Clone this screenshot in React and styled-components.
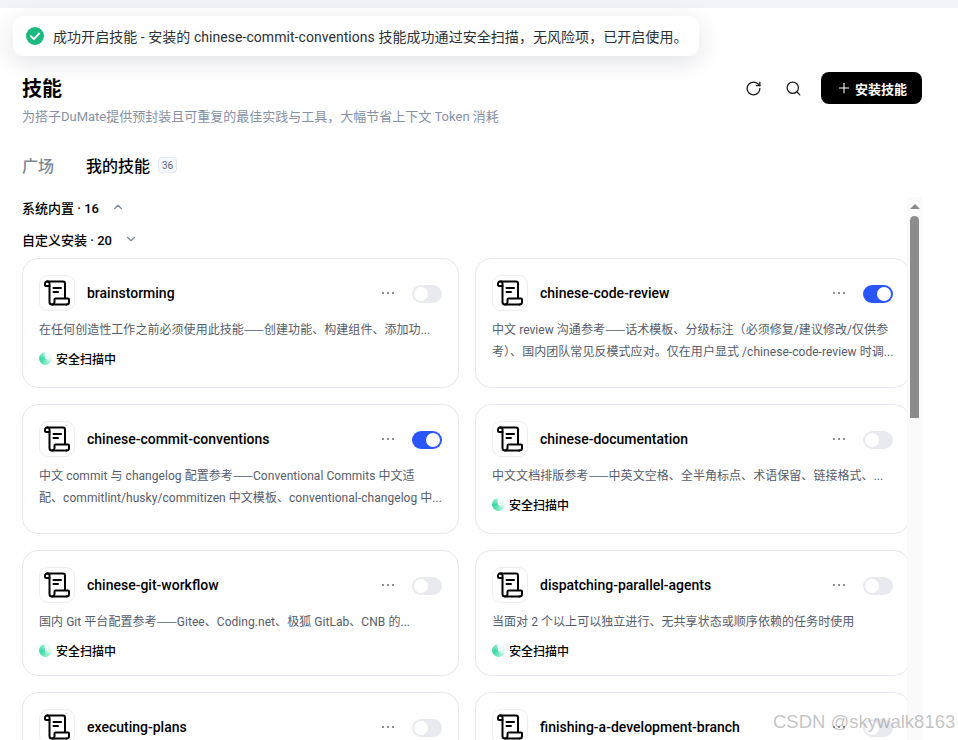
import React from 'react';
import styled, { createGlobalStyle } from 'styled-components';
import { Plus, RotateCw, Search, ChevronUp, ChevronDown } from 'lucide-react';

const GlobalStyle = createGlobalStyle`
    html, body {
        margin: 0;
        background: #fff;
        font-family: Roboto, "Noto Sans CJK SC", sans-serif;
    }
`;

const Page = styled.div`
    position: relative;
    display: flex;
    flex-direction: column;
    height: 740px;
    overflow: hidden;
    background: #fff;
`;

const TopStrip = styled.div`
    flex: none;
    height: 8px;
    background: #f0f3f8;
`;

const Content = styled.div`
    flex: 1;
    min-height: 0;
    display: flex;
    flex-direction: column;
    padding: 0 36px 0 22px;
`;

const Toast = styled.div`
    position: absolute;
    left: 13px;
    top: 16px;
    width: 686px;
    height: 40px;
    box-sizing: border-box;
    display: flex;
    align-items: center;
    gap: 9px;
    padding-left: 13px;
    background: #fff;
    border-radius: 10px;
    box-shadow: 0 6px 24px rgba(20, 30, 60, 0.13);
    font-size: 14px;
    letter-spacing: 0.05px;
    color: #2b2f38;
    white-space: nowrap;
`;

const Header = styled.header`
    display: flex;
    align-items: center;
    justify-content: space-between;
    height: 32px;
    margin-top: 64px;
`;

const Title = styled.h1`
    margin: 0 0 2px;
    font-size: 20px;
    font-weight: 700;
    color: #000;
`;

const Actions = styled.div`
    display: flex;
    align-items: center;
`;

const IconButton = styled.button`
    display: flex;
    align-items: center;
    justify-content: center;
    width: 40px;
    height: 32px;
    padding: 0;
    border: 0;
    background: none;
    color: #1a1a1a;
`;

const InstallButton = styled.button`
    display: flex;
    align-items: center;
    gap: 3px;
    width: 101px;
    height: 32px;
    margin-left: 8px;
    padding: 0 0 0 15px;
    box-sizing: border-box;
    border: 0;
    border-radius: 8px;
    background: #000;
    color: #fff;
    font-family: inherit;
    font-size: 13px;
    font-weight: 700;
`;

const Subtitle = styled.p`
    margin: 3px 0 0;
    font-size: 13px;
    line-height: 20px;
    color: #8791a5;
`;

const Tabs = styled.nav`
    display: flex;
    align-items: center;
    gap: 32px;
    height: 24px;
    margin-top: 26px;
`;

const Tab = styled.span`
    display: flex;
    align-items: center;
    gap: 8px;
    font-size: 16px;
    font-weight: 500;
    color: ${props => (props.$active ? '#000' : '#7d8798')};
`;

const CountBadge = styled.span`
    display: inline-flex;
    align-items: center;
    justify-content: center;
    width: 19px;
    height: 16px;
    box-sizing: border-box;
    border: 1px solid #e4e8f2;
    border-radius: 4px;
    background: #f7f9fd;
    font-size: 10px;
    font-weight: 400;
    color: #5a6478;
`;

const Body = styled.div`
    flex: 1;
    min-height: 0;
    display: flex;
    margin-top: 20px;
`;

const List = styled.div`
    flex: 1;
    min-width: 0;
    overflow: hidden;
`;

const Section = styled.div`
    display: flex;
    align-items: center;
    gap: 12px;
    height: 20px;
    margin-bottom: 12px;
    font-size: 13px;
    font-weight: 500;
    color: #000;
`;

const Grid = styled.div`
    display: grid;
    grid-template-columns: 1fr 1fr;
    gap: 16px;
    margin-top: -3px;
`;

const Card = styled.article`
    box-sizing: border-box;
    padding: 16px 16px 15px;
    border: 1px solid #e6e8ef;
    border-radius: 16px;
    background: #fff;
`;

const CardTop = styled.div`
    display: flex;
    align-items: center;
`;

const IconBox = styled.div`
    flex: none;
    display: flex;
    align-items: center;
    justify-content: center;
    width: 36px;
    height: 36px;
    box-sizing: border-box;
    border: 1px solid #eceef3;
    border-radius: 9px;
    color: #000;
`;

const CardName = styled.div`
    flex: 1;
    margin-left: 12px;
    font-size: 14px;
    font-weight: 500;
    color: #000;
    white-space: nowrap;
`;

const Dots = styled.div`
    display: flex;
    gap: 3px;
    margin-right: 18px;
`;

const Dot = styled.i`
    width: 2px;
    height: 2px;
    border-radius: 50%;
    background: #666b78;
`;

const Toggle = styled.div`
    flex: none;
    display: flex;
    justify-content: ${props => (props.$on ? 'flex-end' : 'flex-start')};
    width: 30px;
    height: 18px;
    margin-top: 1px;
    box-sizing: border-box;
    padding: 2px;
    border-radius: 9px;
    background: ${props => (props.$on ? '#2a56ff' : '#e9eaf0')};
    &::after {
        content: '';
        width: 14px;
        height: 14px;
        border-radius: 50%;
        background: #fff;
    }
`;

const Description = styled.p`
    margin: 8px 0 0;
    font-size: 12px;
    line-height: 22px;
    letter-spacing: 0.05px;
    color: #555c6b;
    white-space: pre;
`;

// Roboto's em dash leaves gaps, the CJK one joins up
const Dash = styled.span`
    font-family: "Noto Sans CJK SC", sans-serif;
    line-height: 0;
    letter-spacing: 0;
`;

const Status = styled.div`
    display: flex;
    align-items: center;
    gap: 4px;
    height: 20px;
    margin-top: 7px;
    font-size: 12px;
    font-weight: 500;
    color: #000;
`;

const StatusSpacer = styled.div`
    height: 9px;
`;

const Spinner = styled.span`
    width: 13px;
    height: 13px;
    border-radius: 50%;
    background: conic-gradient(#f6fdfb 0deg, #dff8ef 100deg, #6fe6bf 190deg, #36d9a4 265deg, #86eccb 335deg, #f6fdfb 360deg);
`;

const ScrollBar = styled.div`
    flex: none;
    display: flex;
    flex-direction: column;
    align-items: center;
    width: 15px;
    background: #fafafa;
`;

const ScrollArrow = styled.div`
    width: 0;
    height: 0;
    margin-top: 7px;
    border-left: 5px solid transparent;
    border-right: 5px solid transparent;
    border-bottom: 5px solid #8c8c8c;
`;

const ScrollThumb = styled.div`
    width: 9px;
    height: 202px;
    margin-top: 7px;
    border-radius: 5px 5px 0 0;
    background: #8c8c8c;
`;

const Watermark = styled.div`
    position: absolute;
    left: 773px;
    top: 711px;
    font-family: "Liberation Sans", sans-serif;
    font-size: 18.5px;
    line-height: 22px;
    color: rgba(110, 110, 110, 0.42);
    white-space: nowrap;
`;

const CheckIcon = () => (
    <svg width="18" height="18" viewBox="0 0 18 18" fill="none">
        <circle cx="9" cy="9" r="9" fill="#19b97f" />
        <path d="M5 9.2l2.9 2.9L13 6.6" stroke="#fff" strokeWidth="2" strokeLinecap="round" strokeLinejoin="round" />
    </svg>
);

const ScrollIcon = () => (
    <svg width="26" height="26" viewBox="0 0 26 26" fill="none" stroke="currentColor" strokeWidth="2" strokeLinecap="round" strokeLinejoin="round">
        <path d="M3 1.5H19a2 2 0 0 1 2 2V18" />
        <path d="M3 1.5a2 2 0 0 0-2 2V5a1 1 0 0 0 1 1H5.5V3.5a2 2 0 0 0-2-2" />
        <path d="M5.5 6V22a2.5 2.5 0 0 0 2.5 2.5H22.5" />
        <path d="M8 24.5a2.5 2.5 0 0 0 2.5-2.5V19.5a1 1 0 0 1 1-1H24a1 1 0 0 1 1 1V22a2.5 2.5 0 0 1-2.5 2.5" />
        <path d="M9.5 8H17" />
        <path d="M9.5 12H14" />
    </svg>
);

const skills = [
    {
        name: 'brainstorming',
        desc: '在任何创造性工作之前必须使用此技能——创建功能、构建组件、添加功...',
        scanning: true
    },
    {
        name: 'chinese-code-review',
        desc: '中文 review 沟通参考——话术模板、分级标注（必须修复/建议修改/仅供参\n考）、国内团队常见反模式应对。仅在用户显式 /chinese-code-review 时调...',
        on: true
    },
    {
        name: 'chinese-commit-conventions',
        desc: '中文 commit 与 changelog 配置参考——Conventional Commits 中文适\n配、commitlint/husky/commitizen 中文模板、conventional-changelog 中...',
        on: true
    },
    {
        name: 'chinese-documentation',
        desc: '中文文档排版参考——中英文空格、全半角标点、术语保留、链接格式、...',
        scanning: true
    },
    {
        name: 'chinese-git-workflow',
        desc: '国内 Git 平台配置参考——Gitee、Coding.net、极狐 GitLab、CNB 的...',
        scanning: true
    },
    {
        name: 'dispatching-parallel-agents',
        desc: '当面对 2 个以上可以独立进行、无共享状态或顺序依赖的任务时使用',
        scanning: true
    },
    {
        name: 'executing-plans',
        desc: '当有书面实施计划需要在单独会话中执行时使用，并设有审查检查点',
        scanning: true
    },
    {
        name: 'finishing-a-development-branch',
        desc: '当实现完成、所有测试通过后，需要决定如何集成工作时使用',
        scanning: true
    }
];

const SkillCard = ({ skill }) => {
    const [before, after] = skill.desc.split('——');
    return (
        <Card>
            <CardTop>
                <IconBox>
                    <ScrollIcon />
                </IconBox>
                <CardName>{skill.name}</CardName>
                <Dots>
                    <Dot />
                    <Dot />
                    <Dot />
                </Dots>
                <Toggle $on={skill.on} />
            </CardTop>
            <Description>
                {before}
                {after && <Dash>——</Dash>}
                {after}
            </Description>
            {skill.scanning ? (
                <Status>
                    <Spinner />
                    安全扫描中
                </Status>
            ) : (
                <StatusSpacer />
            )}
        </Card>
    );
};

export default function App() {
    return (
        <Page>
            <GlobalStyle />
            <TopStrip />
            <Content>
                <Header>
                    <Title>技能</Title>
                    <Actions>
                        <IconButton>
                            <RotateCw size={17} strokeWidth={1.8} />
                        </IconButton>
                        <IconButton>
                            <Search size={17} strokeWidth={1.8} />
                        </IconButton>
                        <InstallButton>
                            <Plus size={16} strokeWidth={1.6} />
                            安装技能
                        </InstallButton>
                    </Actions>
                </Header>
                <Subtitle>为搭子DuMate提供预封装且可重复的最佳实践与工具，大幅节省上下文 Token 消耗</Subtitle>
                <Tabs>
                    <Tab>广场</Tab>
                    <Tab $active>
                        我的技能
                        <CountBadge>36</CountBadge>
                    </Tab>
                </Tabs>
                <Body>
                    <List>
                        <Section>
                            系统内置 · 16
                            <ChevronUp size={14} color="#7d8798" />
                        </Section>
                        <Section>
                            自定义安装 · 20
                            <ChevronDown size={14} color="#7d8798" />
                        </Section>
                        <Grid>
                            {skills.map(skill => (
                                <SkillCard key={skill.name} skill={skill} />
                            ))}
                        </Grid>
                    </List>
                    <ScrollBar>
                        <ScrollArrow />
                        <ScrollThumb />
                    </ScrollBar>
                </Body>
            </Content>
            <Toast>
                <CheckIcon />
                成功开启技能 - 安装的 chinese-commit-conventions 技能成功通过安全扫描，无风险项，已开启使用。
            </Toast>
            <Watermark>CSDN @skywalk8163</Watermark>
        </Page>
    );
}
